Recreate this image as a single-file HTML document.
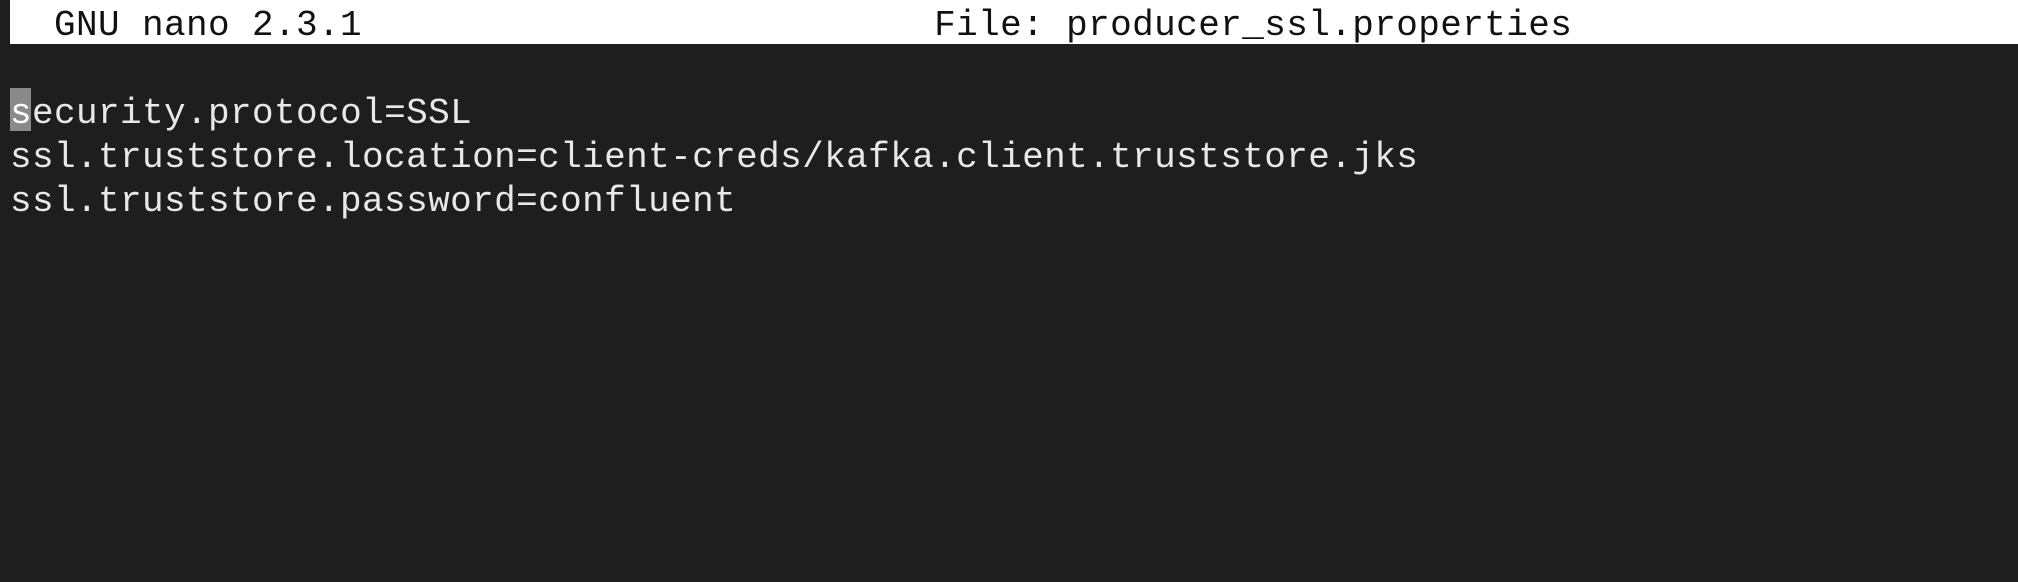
<!DOCTYPE html>
<html><head><style>
html,body{margin:0;padding:0;width:2018px;height:582px;background:#1e1e1e;overflow:hidden}
.row{position:absolute;left:10px;height:44px;line-height:44px;font-family:"Liberation Mono",monospace;font-size:36px;letter-spacing:0.4px;white-space:pre;color:#e8e8e8}
.row span.t{position:relative;top:4px}
.hdr{position:absolute;left:10px;top:0;width:2008px;height:44px;background:#fff}
.hdr .row{left:0;color:#111;top:0}
.curbox{position:absolute;left:10px;top:88px;width:21px;height:43px;background:#8a8a8a}
</style></head><body>
<div class="hdr"><div class="row"><span class="t">  GNU nano 2.3.1                          File: producer_ssl.properties</span></div></div>
<div class="curbox"></div>
<div class="row" style="top:88px"><span class="t"><span style="color:#fff">s</span>ecurity.protocol=SSL</span></div>
<div class="row" style="top:132px"><span class="t">ssl.truststore.location=client-creds/kafka.client.truststore.jks</span></div>
<div class="row" style="top:176px"><span class="t">ssl.truststore.password=confluent</span></div>
</body></html>
